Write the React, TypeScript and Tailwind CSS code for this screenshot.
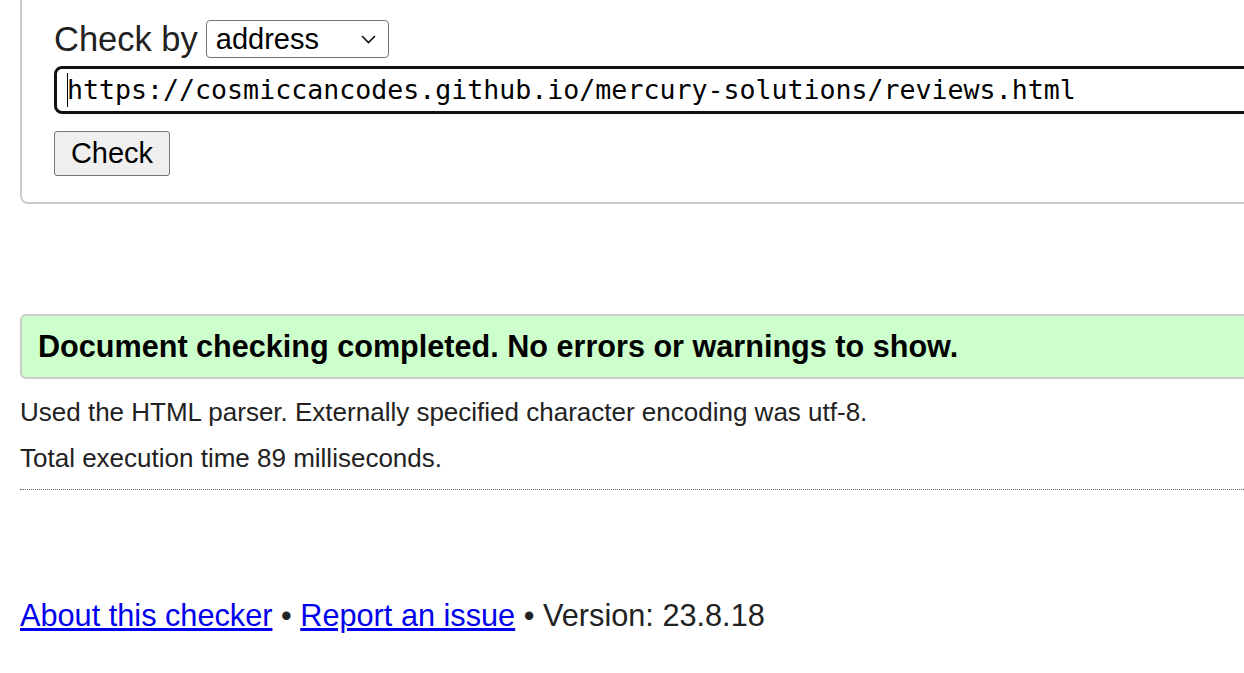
import React from "react";

export default function App() {
  const sans = { fontFamily: '"Liberation Sans", Arial, sans-serif' };
  return (
    <div
      className="w-[1244px] h-[673px] overflow-hidden bg-white text-[#222222]"
      style={sans}
    >
      {/* fieldset (top cut off) */}
      <div className="ml-[20px] w-[1400px] border-2 border-t-0 border-[#cccccc] rounded-b-[8px] pl-[32px] pt-[20px] pb-[26px]">
        <div className="flex items-center h-[38px]">
          <span className="text-[34.5px] leading-none">Check by</span>
          <div className="ml-[8px] w-[183px] h-[38px] border border-[#767676] rounded-[4px] flex items-center justify-between pl-[9px] pr-[12px] text-black">
            <span className="text-[29px] leading-none">address</span>
            <svg width="15" height="9" viewBox="0 0 15 9" fill="none">
              <polyline points="1,1 7.5,7.5 14,1" stroke="#111" strokeWidth="1.6" />
            </svg>
          </div>
        </div>
        <div className="mt-[8px] h-[48px] border-[3px] border-[#111111] rounded-[8px] flex items-center pl-[10px]">
          <span className="w-px h-[34px] bg-black mr-[-1px]"></span>
          <span
            className="leading-none text-black"
            style={{ fontFamily: '"DejaVu Sans Mono", "Liberation Mono", monospace', fontSize: "26.6px" }}
          >
            https://cosmiccancodes.github.io/mercury-solutions/reviews.html
          </span>
        </div>
        <button className="mt-[17px] h-[45px] w-[116px] bg-[#efefef] border border-[#767676] rounded-[3px] text-[29px] leading-none text-black flex items-center justify-center">
          Check
        </button>
      </div>

      {/* result box */}
      <div className="mt-[110px] ml-[20px] w-[1400px] h-[65px] border-2 border-[#cccccc] bg-[#ccffcc] rounded-[6px] flex items-center pl-[16px]">
        <span className="text-[30.6px] font-bold text-black leading-none">
          Document checking completed. No errors or warnings to show.
        </span>
      </div>

      <div className="ml-[20px] mt-[18px] text-[26px] leading-[30px]">
        Used the HTML parser. Externally specified character encoding was utf-8.
      </div>
      <div className="ml-[20px] mt-[16px] text-[26px] leading-[30px]">
        Total execution time 89 milliseconds.
      </div>
      <div className="ml-[20px] mt-[16px] w-[1400px] border-t border-dotted border-[#666666]"></div>

      <div className="ml-[20px] mt-[108px] text-[30.7px] leading-[36px]">
        <a href="#" className="text-[#0000ee] underline">About this checker</a>
        <span> • </span>
        <a href="#" className="text-[#0000ee] underline">Report an issue</a>
        <span> • Version: 23.8.18</span>
      </div>
    </div>
  );
}
